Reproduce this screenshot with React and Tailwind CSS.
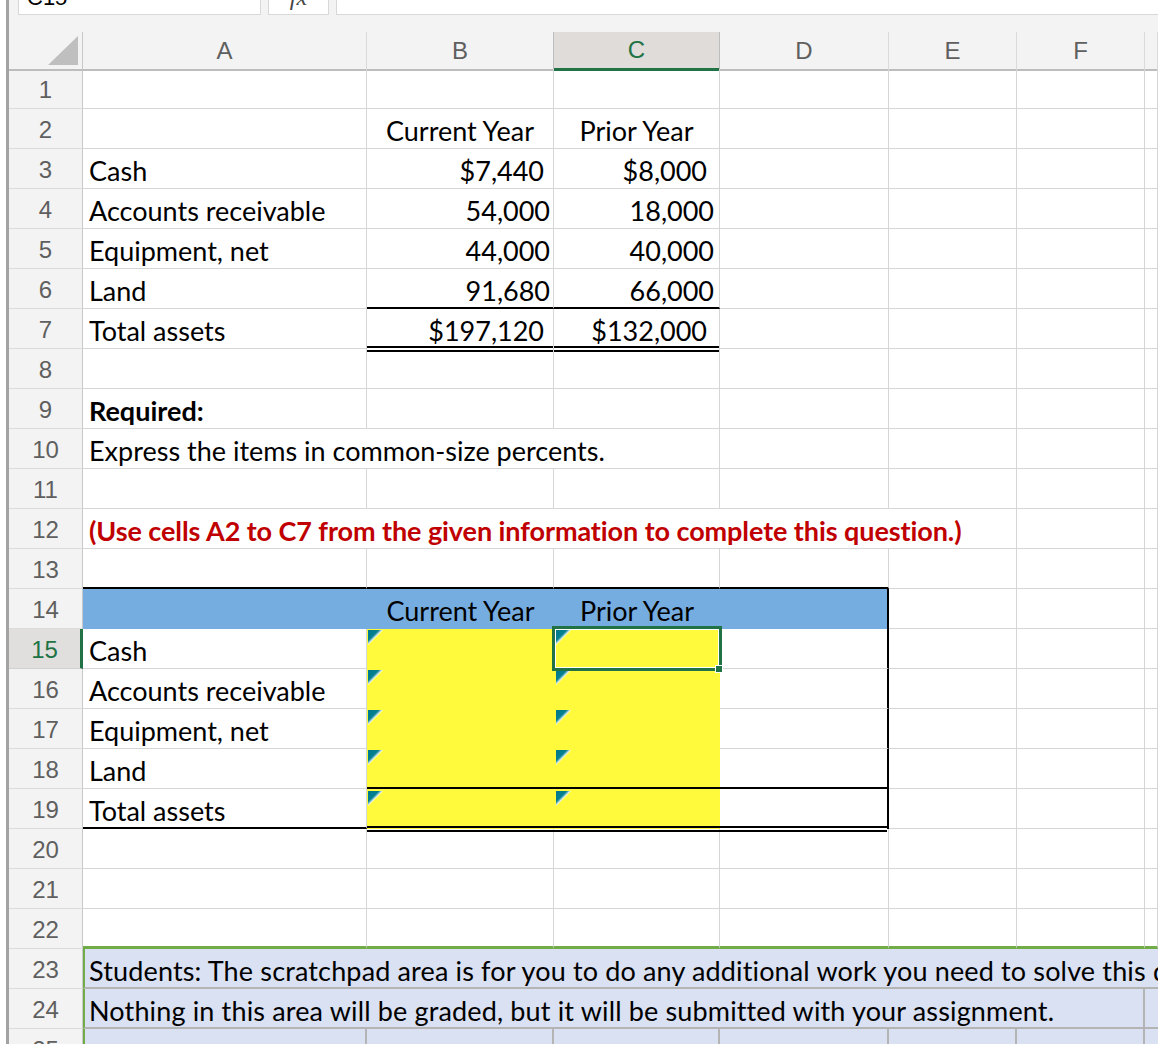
import React from 'react';

const GRID = 'grid grid-cols-[74px_284px_187px_166px_169px_128px_128px_1fr]';
const SPAN = {
  1: 'col-span-1',
  2: 'col-span-2',
  3: 'col-span-3',
  4: 'col-span-4',
  5: 'col-span-5',
  6: 'col-span-6',
  7: 'col-span-7',
};

// gridline + border presets
const GR = 'border-r border-r-[#d6d6d6]';
const GB = 'border-b border-b-[#d6d6d6]';
const BLACK_B = 'border-b-2 border-b-black';
const BLACK_R = 'border-r-2 border-r-black';
const GREEN_B = 'border-b-[3px] border-b-[#70ad47]';
const PAD_R = 'border-r-2 border-r-[#b4b4b4]';
const PAD_B = 'border-b-2 border-b-[#b4b4b4]';

const YELLOW = 'bg-[#fffa3c]';
const BLUE = 'bg-[#76ade1]';
const PAD_BG = 'bg-[#d9e1f2]';

function Cell({ span = 1, right = GR, bottom = GB, bg = '', align = 'left', pad, className = '', children }) {
  const justify = align === 'right' ? 'justify-end' : align === 'center' ? 'justify-center' : 'justify-start';
  const padding = pad ?? (align === 'left' ? 'pl-[6px]' : '');
  return (
    <div
      className={`${SPAN[span]} relative h-[40px] flex items-start pt-[9px] whitespace-nowrap text-[27px] leading-[26px] ${justify} ${padding} ${right} ${bottom} ${bg} ${className}`}
    >
      {children}
    </div>
  );
}

const blanks = (k, props = {}) => Array.from({ length: k }).map((_, i) => <Cell key={`b${i}`} {...props} />);

// double accounting underline, drawn across the gridline like Excel does
function DoubleLine() {
  return <div className="absolute z-10 left-0 right-0 -bottom-[3px] h-[6px] border-y-2 border-black" />;
}

function Marker({ left = 'left-0', top = 'top-0' }) {
  return (
    <svg className={`absolute ${left} ${top}`} width="15" height="15" viewBox="0 0 15 15">
      <defs>
        <linearGradient id="mk" x1="0" y1="0" x2="1" y2="1">
          <stop offset="0" stopColor="#00788a" />
          <stop offset="0.36" stopColor="#03808f" />
          <stop offset="0.5" stopColor="#ffffff" />
        </linearGradient>
      </defs>
      <polygon points="0,0 15,0 0,15" fill="url(#mk)" />
    </svg>
  );
}

function RowNum({ n, active }) {
  return (
    <div
      className={`h-[40px] flex justify-center items-start pt-[8px] text-[24px] leading-[26px] font-['Liberation_Sans',sans-serif] border-b ${
        active
          ? 'bg-[#e1dfdd] text-[#217346] border-b-[#d0d0d0] border-r-[3px] border-r-[#217346]'
          : 'bg-[#f3f3f3] text-[#5f5f5f] border-b-[#dcdcdc] border-r border-r-[#c8c8c8]'
      }`}
    >
      {n}
    </div>
  );
}

function Row({ n, active, children }) {
  return (
    <div className={`${GRID} shrink-0`}>
      <RowNum n={n} active={active} />
      {children}
    </div>
  );
}

function TopBar() {
  return (
    <div className="h-[32px] shrink-0 bg-[#f3f3f3] flex items-start">
      <div className="ml-[9px] w-[243px] h-[15px] bg-white border border-t-0 border-[#d8d8d8] flex items-end overflow-hidden pl-[8px]">
        <span className="mb-[5px] text-[22px] leading-[22px] font-['Liberation_Sans',sans-serif]">C15</span>
      </div>
      <div className="ml-[7px] w-[61px] h-[15px] bg-white border border-t-0 border-[#d8d8d8] flex items-end justify-center overflow-hidden">
        <span className="mb-[5px] text-[24px] leading-[24px] italic font-['Liberation_Serif',serif] text-[#444]">fx</span>
      </div>
      <div className="ml-[7px] flex-1 h-[15px] bg-white border border-t-0 border-r-0 border-[#d8d8d8]" />
    </div>
  );
}

function ColumnHeaders() {
  const letters = ['A', 'B', 'C', 'D', 'E', 'F', ''];
  return (
    <div className={`${GRID} h-[37px] shrink-0 bg-[#f3f3f3] font-['Liberation_Sans',sans-serif] text-[24px]`}>
      <div className="relative border-r border-r-[#c8c8c8] border-b-2 border-b-[#bdbdbd]">
        <svg className="absolute right-[4px] bottom-[4px]" width="30" height="29" viewBox="0 0 30 29">
          <polygon points="30,0 30,29 0,29" fill="#bfbfbf" />
        </svg>
      </div>
      {letters.map((l) =>
        l === 'C' ? (
          <div
            key={l}
            className="flex items-center justify-center bg-[#dfdcd9] text-[#217346] border-r border-r-[#bdbdbd] border-b-[3px] border-b-[#217346]"
          >
            {l}
          </div>
        ) : (
          <div
            key={l || 'G'}
            className={`flex items-center justify-center text-[#5f5f5f] border-b-2 border-b-[#bdbdbd] border-r ${
              l === 'B' ? 'border-r-[#bdbdbd]' : 'border-r-[#dadada]'
            }`}
          >
            {l}
          </div>
        )
      )}
    </div>
  );
}

function Selection() {
  return (
    <div className="absolute z-20 -top-[3px] -left-[2px] -right-[2px] -bottom-[2px] border-[3px] border-[#217346]">
      <div className="h-full w-full border border-white" />
      <div className="absolute -right-[4px] -bottom-[5px] w-[8px] h-[8px] bg-[#217346] border border-white" />
    </div>
  );
}

function InputRow({ n, label, active, last, beforeLast }) {
  const yb = beforeLast ? BLACK_B : '';
  const db = last ? '' : beforeLast ? BLACK_B : GB;
  return (
    <Row n={n} active={active}>
      <Cell bottom={last ? BLACK_B : GB}>{label}</Cell>
      <Cell bg={YELLOW} right="" bottom={yb}>
        <Marker left="left-[1px]" top={last ? 'top-[2px]' : 'top-[1px]'} />
        {last && <DoubleLine />}
      </Cell>
      <Cell bg={YELLOW} right="" bottom={yb}>
        <Marker left="left-[2px]" top={last ? 'top-[2px]' : 'top-[1px]'} />
        {active && <Selection />}
        {last && <DoubleLine />}
      </Cell>
      <Cell right={BLACK_R} bottom={db}>{last && <DoubleLine />}</Cell>
      {blanks(3)}
    </Row>
  );
}

export default function App() {
  return (
    <div className="w-[1158px] h-[1044px] overflow-hidden bg-white flex font-['Lato',sans-serif] text-black">
      <div className="w-[6px] shrink-0 bg-white" />
      <div className="w-[3px] shrink-0 bg-[#a3a3a3]" />
      <div className="flex-1 min-w-0 flex flex-col">
        <TopBar />
        <ColumnHeaders />

        <Row n={1}>{blanks(7)}</Row>
        <Row n={2}>
          <Cell />
          <Cell align="center">Current Year</Cell>
          <Cell align="center">Prior Year</Cell>
          {blanks(4)}
        </Row>
        <Row n={3}>
          <Cell>Cash</Cell>
          <Cell align="right" pad="pr-[9px]">$7,440</Cell>
          <Cell align="right" pad="pr-[12px]">$8,000</Cell>
          {blanks(4)}
        </Row>
        <Row n={4}>
          <Cell>Accounts receivable</Cell>
          <Cell align="right" pad="pr-[3px]">54,000</Cell>
          <Cell align="right" pad="pr-[5px]">18,000</Cell>
          {blanks(4)}
        </Row>
        <Row n={5}>
          <Cell>Equipment, net</Cell>
          <Cell align="right" pad="pr-[3px]">44,000</Cell>
          <Cell align="right" pad="pr-[5px]">40,000</Cell>
          {blanks(4)}
        </Row>
        <Row n={6}>
          <Cell>Land</Cell>
          <Cell align="right" pad="pr-[3px]" bottom={BLACK_B}>91,680</Cell>
          <Cell align="right" pad="pr-[5px]" bottom={BLACK_B}>66,000</Cell>
          {blanks(4)}
        </Row>
        <Row n={7}>
          <Cell>Total assets</Cell>
          <Cell align="right" pad="pr-[9px]" bottom="">
            $197,120
            <DoubleLine />
          </Cell>
          <Cell align="right" pad="pr-[12px]" bottom="">
            $132,000
            <DoubleLine />
          </Cell>
          {blanks(4)}
        </Row>
        <Row n={8}>{blanks(7)}</Row>
        <Row n={9}>
          <Cell className="font-bold">Required:</Cell>
          {blanks(6)}
        </Row>
        <Row n={10}>
          <Cell span={3}>Express the items in common-size percents.</Cell>
          {blanks(4)}
        </Row>
        <Row n={11}>{blanks(7)}</Row>
        <Row n={12}>
          <Cell span={5} className="font-bold text-[#c00000] tracking-[-0.08px]">
            (Use cells A2 to C7 from the given information to complete this question.)
          </Cell>
          {blanks(2)}
        </Row>
        <Row n={13}>
          {blanks(4, { bottom: BLACK_B })}
          {blanks(3)}
        </Row>
        <Row n={14}>
          <Cell bg={BLUE} right="" bottom="" />
          <Cell bg={BLUE} right="" bottom="" align="center">Current Year</Cell>
          <Cell bg={BLUE} right="" bottom="" align="center">Prior Year</Cell>
          <Cell bg={BLUE} right={BLACK_R} bottom="" />
          {blanks(3)}
        </Row>
        <InputRow n={15} label="Cash" active />
        <InputRow n={16} label="Accounts receivable" />
        <InputRow n={17} label="Equipment, net" />
        <InputRow n={18} label="Land" beforeLast />
        <InputRow n={19} label="Total assets" last />
        <Row n={20}>{blanks(7)}</Row>
        <Row n={21}>{blanks(7)}</Row>
        <Row n={22}>{blanks(7, { bottom: GREEN_B })}</Row>
        <Row n={23}>
          <Cell
            span={7}
            bg={PAD_BG}
            right=""
            bottom={PAD_B}
            pad="pl-[4px]"
            className="border-l-2 border-l-[#70ad47] tracking-[0.15px]"
          >
            Students: The scratchpad area is for you to do any additional work you need to solve this question.
          </Cell>
        </Row>
        <Row n={24}>
          <Cell
            span={6}
            bg={PAD_BG}
            right={PAD_R}
            bottom={PAD_B}
            pad="pl-[4px]"
            className="border-l-2 border-l-[#70ad47] tracking-[0.15px]"
          >
            Nothing in this area will be graded, but it will be submitted with your assignment.
          </Cell>
          <Cell bg={PAD_BG} right="" bottom={PAD_B} />
        </Row>
        <Row n={25}>
          <Cell bg={PAD_BG} right={PAD_R} bottom={PAD_B} className="border-l-2 border-l-[#70ad47]" />
          {blanks(5, { bg: PAD_BG, right: PAD_R, bottom: PAD_B })}
          <Cell bg={PAD_BG} right="" bottom={PAD_B} />
        </Row>
      </div>
    </div>
  );
}
